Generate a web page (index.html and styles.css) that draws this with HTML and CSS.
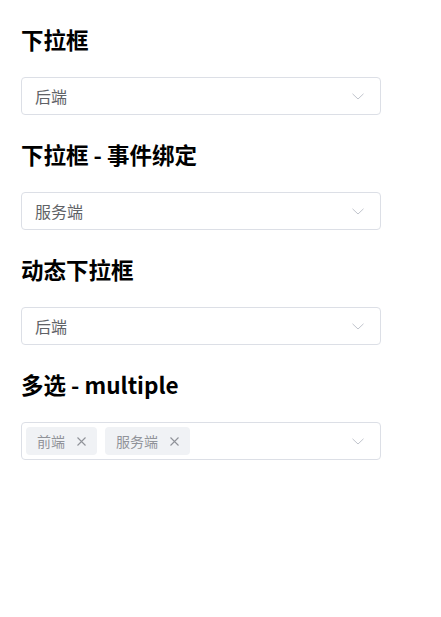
FILE: index.html
```html
<!DOCTYPE html>
<html lang="zh-CN">
<head>
    <meta charset="UTF-8">
    <meta name="viewport" content="width=device-width, initial-scale=1.0">
    <title>Select</title>
    <link rel="stylesheet" href="styles.css">
</head>
<body>
    <div class="page">
        <h3>下拉框</h3>
        <div class="select">
            <span class="value">后端</span>
            <svg class="arrow" width="12" height="7" viewBox="0 0 12 7"><path d="M0.5 0.8 L6 6 L11.5 0.8" fill="none" stroke="#c0c4cc" stroke-width="1"/></svg>
        </div>

        <h3>下拉框 - 事件绑定</h3>
        <div class="select">
            <span class="value">服务端</span>
            <svg class="arrow" width="12" height="7" viewBox="0 0 12 7"><path d="M0.5 0.8 L6 6 L11.5 0.8" fill="none" stroke="#c0c4cc" stroke-width="1"/></svg>
        </div>

        <h3>动态下拉框</h3>
        <div class="select">
            <span class="value">后端</span>
            <svg class="arrow" width="12" height="7" viewBox="0 0 12 7"><path d="M0.5 0.8 L6 6 L11.5 0.8" fill="none" stroke="#c0c4cc" stroke-width="1"/></svg>
        </div>

        <h3>多选 - multiple</h3>
        <div class="select multi">
            <div class="tags">
                <span class="tag">前端<svg class="close" width="9" height="9" viewBox="0 0 9 9"><path d="M0.5 0.5 L8.5 8.5 M8.5 0.5 L0.5 8.5" stroke="#909399" stroke-width="1.1"/></svg></span>
                <span class="tag">服务端<svg class="close" width="9" height="9" viewBox="0 0 9 9"><path d="M0.5 0.5 L8.5 8.5 M8.5 0.5 L0.5 8.5" stroke="#909399" stroke-width="1.1"/></svg></span>
            </div>
            <svg class="arrow" width="12" height="7" viewBox="0 0 12 7"><path d="M0.5 0.8 L6 6 L11.5 0.8" fill="none" stroke="#c0c4cc" stroke-width="1"/></svg>
        </div>
    </div>
</body>
</html>
```

FILE: styles.css
```css
body {
    margin: 0;
    background: #fff;
    font-family: "Noto Sans CJK SC", "Noto Sans", sans-serif;
}
.page {
    padding: 24px 21px;
    width: 360px;
}
h3 {
    font-size: 22.5px;
    font-weight: 700;
    line-height: 30px;
    color: #000;
    margin: 0 0 23px 0;
}
.select {
    box-sizing: border-box;
    height: 38px;
    border: 1px solid #dcdfe6;
    border-radius: 4px;
    display: flex;
    align-items: center;
    justify-content: space-between;
    padding: 0 16px 0 13px;
    margin-bottom: 24px;
}
.value {
    font-size: 16px;
    color: #606266;
}
.arrow {
    display: block;
}
.multi {
    padding-left: 4px;
}
.tags {
    display: flex;
    gap: 8px;
}
.tag {
    height: 28px;
    box-sizing: border-box;
    background: #f0f2f5;
    border-radius: 4px;
    padding: 0 11px;
    display: flex;
    align-items: center;
    font-size: 14px;
    color: #909399;
}
.close {
    margin-left: 12px;
    display: block;
}
```
